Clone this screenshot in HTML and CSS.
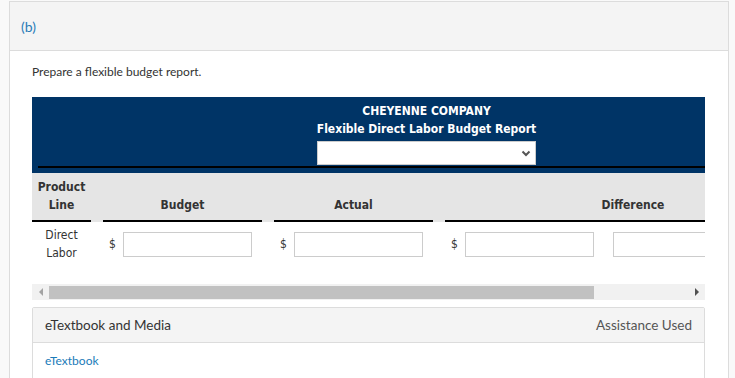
FILE: index.html
```html
<!DOCTYPE html>
<html lang="en">
<head>
    <meta charset="UTF-8">
    <meta name="viewport" content="width=device-width, initial-scale=1.0">
    <title>Flexible Budget Report</title>
    <link rel="stylesheet" href="styles.css">
</head>
<body>
    <div class="panel">
        <div class="panel-head">(b)</div>
        <div class="panel-body">
            <p class="prompt">Prepare a flexible budget report.</p>

            <!-- Report table, wider than the panel -->
            <div class="scroller">
                <div class="report">
                    <div class="report-title">
                        <div class="title-inner">
                            <div>CHEYENNE COMPANY</div>
                            <div>Flexible Direct Labor Budget Report</div>
                            <div class="period-select">
                                <svg width="10" height="7" viewBox="0 0 10 7"><polyline points="1.5,1.5 5,5 8.5,1.5" fill="none" stroke="#555" stroke-width="2"/></svg>
                            </div>
                        </div>
                    </div>
                    <div class="grid head-row">
                        <div class="cell">Product<br>Line</div>
                        <div class="cell">Budget</div>
                        <div class="cell">Actual</div>
                        <div class="cell">Difference</div>
                    </div>
                    <div class="grid body-row">
                        <div class="cell label">Direct<br>Labor</div>
                        <div class="cell money"><span>$</span><input type="text"></div>
                        <div class="cell money"><span>$</span><input type="text"></div>
                        <div class="cell money"><span>$</span><input type="text"><input type="text" class="extra"></div>
                    </div>
                </div>
            </div>

            <!-- Horizontal scrollbar -->
            <div class="hbar">
                <div class="hbar-btn"><span class="arrow-left"></span></div>
                <div class="hbar-track"><div class="hbar-thumb"></div></div>
                <div class="hbar-btn"><span class="arrow-right"></span></div>
            </div>

            <div class="media">
                <div class="media-head">
                    <span>eTextbook and Media</span>
                    <span class="assist">Assistance Used</span>
                </div>
                <div class="media-body">
                    <a href="#" class="link">eTextbook</a>
                </div>
            </div>
        </div>
    </div>
</body>
</html>
```

FILE: styles.css
```css
body {
    margin: 0;
    padding: 1px 6px 0 9px;
    background-color: #f9f9f9;
    font-family: Lato, "Open Sans", sans-serif;
    color: #333;
    overflow: hidden;
}
.panel {
    border: 1px solid #dcdcdc;
    border-bottom: none;
    background-color: #fff;
}
.panel-head {
    height: 48px;
    line-height: 50px;
    padding-left: 11px;
    background-color: #f4f4f4;
    border-bottom: 1px solid #dcdcdc;
    color: #2a7cb8;
    font-size: 14px;
}
.panel-body {
    padding: 13px 23px 0 22px;
}
.prompt {
    margin: 0 0 17px;
    font-size: 12px;
    line-height: 16px;
}
.scroller {
    overflow: hidden;
}
.report {
    width: 789px;
    font-family: "DejaVu Sans Condensed", "DejaVu Sans", sans-serif;
    font-size: 12px;
}
.report-title {
    background-color: #003466;
    padding: 5px 6px 5px 6px;
    color: #fff;
    font-weight: bold;
    text-align: center;
    line-height: 18px;
}
.title-inner {
    border-bottom: 2px solid #000;
    padding-bottom: 1px;
}
.period-select {
    width: 213px;
    height: 22px;
    margin: 3px auto 0;
    background-color: #fff;
    border: 1px solid #ccc;
    display: flex;
    align-items: center;
    justify-content: flex-end;
    padding-right: 4px;
    box-sizing: content-box;
}
.grid {
    display: grid;
    grid-template-columns: 59px 159px 159px 376px;
    column-gap: 12px;
}
.head-row {
    background-color: #e5e5e5;
    align-items: end;
    font-weight: bold;
    color: #333;
    line-height: 18px;
}
.head-row .cell {
    text-align: center;
    padding: 5px 0 6px;
    border-bottom: 2px solid #000;
}
.body-row {
    align-items: center;
    padding: 4px 0;
    line-height: 18px;
}
.label {
    text-align: center;
}
.money {
    display: flex;
    align-items: center;
    padding-left: 6px;
}
.money span {
    width: 6px;
    margin-right: 8px;
    color: #333;
}
.money input {
    width: 129px;
    height: 25px;
    box-sizing: border-box;
    border: 1px solid #ccc;
    padding: 0 4px;
}
.money .extra {
    width: 180px;
    margin-left: 19px;
}
.hbar {
    display: flex;
    height: 16px;
    margin-top: 18px;
    background-color: #f1f1f1;
}
.hbar-btn {
    width: 17px;
    display: flex;
    align-items: center;
    justify-content: center;
}
.hbar-track {
    flex: 1;
    padding: 2px 94px 1px 0;
}
.hbar-thumb {
    height: 100%;
    background-color: #c1c1c1;
}
.arrow-left {
    border-top: 4px solid transparent;
    border-bottom: 4px solid transparent;
    border-right: 4px solid #a3a3a3;
}
.arrow-right {
    border-top: 4px solid transparent;
    border-bottom: 4px solid transparent;
    border-left: 4px solid #505050;
}
.media {
    margin-top: 7px;
    border: 1px solid #dcdcdc;
    border-radius: 2px;
}
.media-head {
    height: 34px;
    padding: 0 12px;
    display: flex;
    align-items: center;
    justify-content: space-between;
    background-color: #f4f4f4;
    border-bottom: 1px solid #dcdcdc;
    font-size: 13.5px;
}
.assist {
    color: #555;
}
.media-body {
    padding: 9px 12px 20px;
    font-size: 12px;
    line-height: 18px;
}
.link {
    color: #1a7bb9;
    text-decoration: none;
}
```
